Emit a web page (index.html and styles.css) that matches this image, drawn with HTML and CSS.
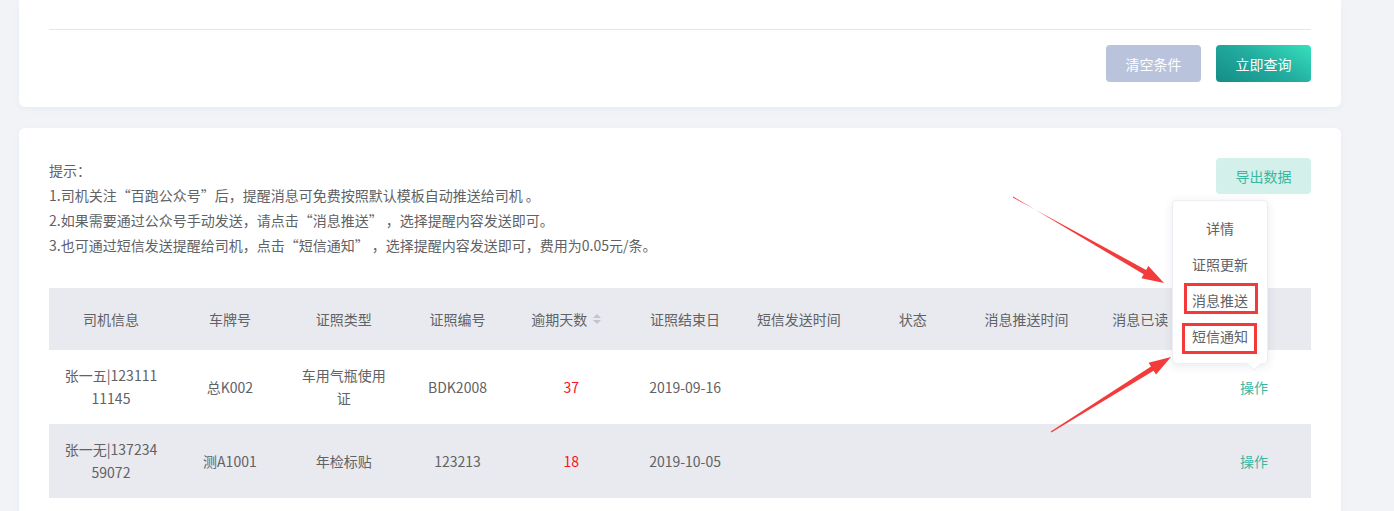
FILE: index.html
```html
<!DOCTYPE html>
<html lang="zh">
<head>
<meta charset="utf-8">
<link rel="stylesheet" href="styles.css">
</head>
<body>
<div class="page">
  <section class="card card-search">
    <div class="form-spacer"></div>
    <div class="divider"></div>
    <div class="actions">
      <button class="btn btn-clear">清空条件</button>
      <button class="btn btn-query">立即查询</button>
    </div>
  </section>

  <section class="card card-list">
    <div class="list-top">
      <div class="tips">
        <p>提示：</p>
        <p>1.司机关注“百跑公众号”后，提醒消息可免费按照默认模板自动推送给司机 。</p>
        <p>2.如果需要通过公众号手动发送，请点击“消息推送” ，选择提醒内容发送即可。</p>
        <p>3.也可通过短信发送提醒给司机，点击“短信通知” ，选择提醒内容发送即可，费用为0.05元/条。</p>
      </div>
      <button class="btn btn-export">导出数据</button>
    </div>

    <table class="grid">
      <colgroup>
        <col class="col-first">
        <col span="10">
      </colgroup>
      <thead>
        <tr>
          <th>司机信息</th>
          <th>车牌号</th>
          <th>证照类型</th>
          <th>证照编号</th>
          <th><span class="sortable">逾期天数<span class="sort"><i class="up"></i><i class="down"></i></span></span></th>
          <th>证照结束日</th>
          <th>短信发送时间</th>
          <th>状态</th>
          <th>消息推送时间</th>
          <th>消息已读</th>
          <th>操作</th>
        </tr>
      </thead>
      <tbody>
        <tr>
          <td class="driver">张一五|12311111145</td>
          <td>总K002</td>
          <td>车用气瓶使用证</td>
          <td>BDK2008</td>
          <td class="overdue">37</td>
          <td>2019-09-16</td>
          <td></td>
          <td></td>
          <td></td>
          <td></td>
          <td class="op">操作</td>
        </tr>
        <tr class="striped">
          <td class="driver">张一无|13723459072</td>
          <td>测A1001</td>
          <td>年检标贴</td>
          <td>123213</td>
          <td class="overdue">18</td>
          <td>2019-10-05</td>
          <td></td>
          <td></td>
          <td></td>
          <td></td>
          <td class="op">操作</td>
        </tr>
      </tbody>
    </table>
  </section>

  <div class="popover">
    <ul class="menu">
      <li>详情</li>
      <li>证照更新</li>
      <li>消息推送</li>
      <li>短信通知</li>
    </ul>
    <span class="mark mark-push"></span>
    <span class="mark mark-sms"></span>
    <span class="popover-arrow"></span>
  </div>

  <svg class="arrows" width="1394" height="511" viewBox="0 0 1394 511">
    <polygon fill="#f43b3b" points="1012.8,197.5 1146.1,269.9 1148.4,266.0 1164,283 1141.4,278.2 1143.7,274.3 1013.3,196.6"/>
    <polygon fill="#f43b3b" points="1050.7,431.6 1151.0,366.6 1148.6,362.8 1171,357 1156.0,374.6 1153.6,370.8 1051.4,432.4"/>
  </svg>
</div>
</body>
</html>
```

FILE: styles.css
```css
* {
  box-sizing: border-box;
}

html, body {
  margin: 0;
  padding: 0;
  background: #f1f3f7;
  font-family: "Noto Sans CJK SC", "Noto Sans", "Liberation Sans", sans-serif;
  font-size: 14px;
  color: #606266;
  overflow: hidden;
}

.page {
  position: relative;
  width: 1394px;
  height: 511px;
  padding-left: 19px;
}

.card {
  width: 1322px;
  background: #fff;
  border-radius: 6px;
  box-shadow: 0 2px 6px rgba(60, 90, 120, 0.05);
}

.card-search {
  padding: 0 30px 25px;
  border-radius: 0 0 6px 6px;
}

.form-spacer {
  height: 29px;
}

.divider {
  height: 1px;
  background: #e4e8ee;
}

.actions {
  display: flex;
  justify-content: flex-end;
  gap: 15px;
  margin-top: 15px;
}

.btn {
  border: 0;
  border-radius: 4px;
  height: 37px;
  width: 95px;
  padding: 0;
  font-family: inherit;
  font-size: 14px;
  color: #fff;
  cursor: pointer;
}

.btn-clear {
  background: #bac3dc;
}

.btn-query {
  background: linear-gradient(30deg, #148d87 0%, #22ab9e 50%, #36e0be 100%);
}

.card-list {
  margin-top: 21px;
  padding: 30px 30px 30px;
  min-height: 400px;
}

.list-top {
  display: flex;
  justify-content: space-between;
  align-items: flex-start;
}

.tips p {
  margin: 0;
  line-height: 25px;
  height: 25px;
  white-space: nowrap;
}

.btn-export {
  height: 36px;
  background: #d3f0eb;
  color: #3ab7a1;
}

.grid {
  width: 1262px;
  margin-top: 30px;
  border-collapse: collapse;
  table-layout: fixed;
}

.grid .col-first {
  width: 124px;
}

.grid th {
  height: 62px;
  background: #e9eaef;
  font-weight: normal;
  color: #606266;
  padding: 0 6px;
  text-align: center;
  white-space: nowrap;
}

.grid td {
  height: 74px;
  padding: 0 10px;
  text-align: center;
  line-height: 23px;
  color: #606266;
  word-break: break-all;
}

.grid td.driver {
  padding: 0 14px;
}

.grid tr.striped td {
  background: #e9eaef;
}

.sortable {
  display: inline-flex;
  align-items: center;
}

.sort {
  display: inline-flex;
  flex-direction: column;
  gap: 2px;
  margin-left: 6px;
  margin-right: 10px;
}

.sort i {
  display: block;
  width: 0;
  height: 0;
  border-left: 4px solid transparent;
  border-right: 4px solid transparent;
}

.sort .up {
  border-bottom: 4px solid #c0c4cc;
}

.sort .down {
  border-top: 4px solid #c0c4cc;
}

.overdue {
  color: #f5141c !important;
}

.op {
  color: #3ab7a1 !important;
}

.popover {
  position: absolute;
  left: 1172px;
  top: 200px;
  width: 96px;
  height: 164px;
  background: #fff;
  border: 1px solid #eceef3;
  border-radius: 4px;
  box-shadow: 0 2px 10px rgba(40, 50, 80, 0.1);
}

.menu {
  list-style: none;
  margin: 0;
  padding: 9px 0;
}

.menu li {
  height: 36px;
  line-height: 36px;
  text-align: center;
  color: #606266;
}

.mark {
  position: absolute;
  border: 3px solid #f33a3a;
}

.mark-push {
  left: 11px;
  top: 82px;
  width: 74px;
  height: 31px;
}

.mark-sms {
  left: 9px;
  top: 122px;
  width: 75px;
  height: 31px;
}

.popover-arrow {
  position: absolute;
  left: 76px;
  bottom: -6px;
  width: 10px;
  height: 10px;
  background: #fff;
  border-right: 1px solid #eceef3;
  border-bottom: 1px solid #eceef3;
  transform: rotate(45deg);
}

.arrows {
  position: absolute;
  left: 0;
  top: 0;
  pointer-events: none;
}
```
